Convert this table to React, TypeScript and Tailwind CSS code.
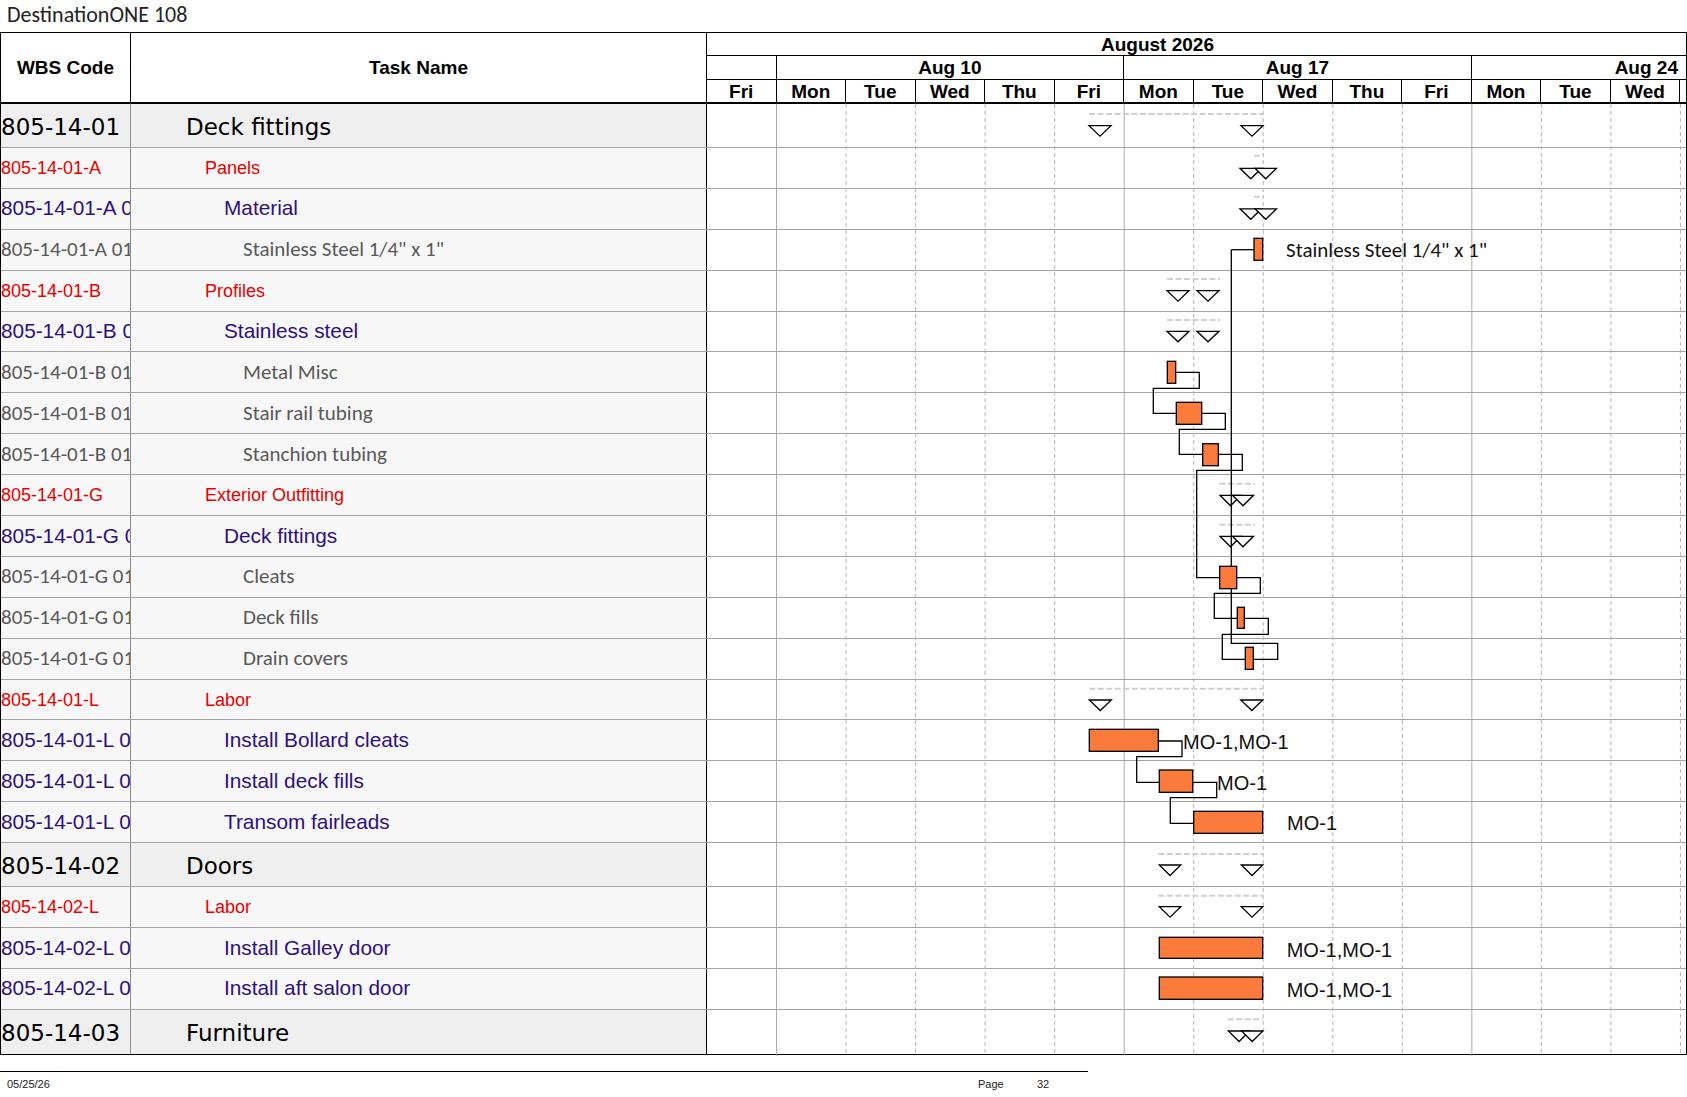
import React from 'react';

const DAY = 69.53;
type Lvl = 1 | 2 | 3 | 4;
type Row = { lvl: Lvl; code: string; name: string };

const rows: Row[] = [
  { lvl: 1, code: '805-14-01', name: 'Deck fittings' },
  { lvl: 2, code: '805-14-01-A', name: 'Panels' },
  { lvl: 3, code: '805-14-01-A 01', name: 'Material' },
  { lvl: 4, code: '805-14-01-A 01 01', name: 'Stainless Steel 1/4" x 1"' },
  { lvl: 2, code: '805-14-01-B', name: 'Profiles' },
  { lvl: 3, code: '805-14-01-B 01', name: 'Stainless steel' },
  { lvl: 4, code: '805-14-01-B 01 01', name: 'Metal Misc' },
  { lvl: 4, code: '805-14-01-B 01 02', name: 'Stair rail tubing' },
  { lvl: 4, code: '805-14-01-B 01 03', name: 'Stanchion tubing' },
  { lvl: 2, code: '805-14-01-G', name: 'Exterior Outfitting' },
  { lvl: 3, code: '805-14-01-G 01', name: 'Deck fittings' },
  { lvl: 4, code: '805-14-01-G 01 01', name: 'Cleats' },
  { lvl: 4, code: '805-14-01-G 01 02', name: 'Deck fills' },
  { lvl: 4, code: '805-14-01-G 01 03', name: 'Drain covers' },
  { lvl: 2, code: '805-14-01-L', name: 'Labor' },
  { lvl: 3, code: '805-14-01-L 01', name: 'Install Bollard cleats' },
  { lvl: 3, code: '805-14-01-L 02', name: 'Install deck fills' },
  { lvl: 3, code: '805-14-01-L 03', name: 'Transom fairleads' },
  { lvl: 1, code: '805-14-02', name: 'Doors' },
  { lvl: 2, code: '805-14-02-L', name: 'Labor' },
  { lvl: 3, code: '805-14-02-L 01', name: 'Install Galley door' },
  { lvl: 3, code: '805-14-02-L 02', name: 'Install aft salon door' },
  { lvl: 1, code: '805-14-03', name: 'Furniture' },
];

const textCls: Record<Lvl, string> = {
  1: "font-['DejaVu_Sans',sans-serif] text-[23px] text-black pt-[3px]",
  2: "font-['Liberation_Sans',Arial,sans-serif] text-[18px] text-[#e60000]",
  3: "font-['Liberation_Sans',Arial,sans-serif] text-[20.8px] text-[#2e1080]",
  4: "font-['Carlito','Lato',sans-serif] text-[21px] text-[#595959]",
};
const namePad: Record<Lvl, string> = {
  1: 'pl-[55px]',
  2: 'pl-[74px]',
  3: 'pl-[93px]',
  4: 'pl-[112px]',
};

const days = ['Fri', 'Mon', 'Tue', 'Wed', 'Thu', 'Fri', 'Mon', 'Tue', 'Wed', 'Thu', 'Fri', 'Mon', 'Tue', 'Wed'];

type Summary = { y: number; x1: number; x2: number; tris: number[]; ty: number; w?: number };
const summaries: Summary[] = [
  { y: 114, x1: 1088, x2: 1262, tris: [1088, 1240], ty: 125.7 },
  { y: 155.7, x1: 1253, x2: 1262, tris: [1239, 1254], ty: 168.3, w: 21.5 },
  { y: 196.7, x1: 1253, x2: 1262, tris: [1239, 1254], ty: 208.8, w: 21.5 },
  { y: 279, x1: 1166, x2: 1219, tris: [1166, 1196], ty: 290.7 },
  { y: 320, x1: 1166, x2: 1219, tris: [1166, 1196], ty: 331.3 },
  { y: 483.7, x1: 1218.3, x2: 1254, tris: [1219, 1231.5], ty: 495.3, w: 21 },
  { y: 524.7, x1: 1218.3, x2: 1254, tris: [1219, 1231.5], ty: 536.3, w: 21 },
  { y: 688.7, x1: 1088.3, x2: 1262.3, tris: [1088.3, 1239.8], ty: 700 },
  { y: 854, x1: 1157.3, x2: 1262.3, tris: [1158.3, 1240.3], ty: 865, w: 21.5 },
  { y: 895.7, x1: 1157.3, x2: 1262.3, tris: [1158.3, 1240.3], ty: 906.7, w: 21.5 },
  { y: 1019.3, x1: 1226.7, x2: 1262, tris: [1227.3, 1240.5], ty: 1031, w: 21.5 },
];

const bars: [number, number, number, number][] = [
  [1253, 1261.7, 238.3, 260.3],
  [1166.3, 1174.7, 361.3, 383.3],
  [1175.3, 1200.7, 402.3, 424.3],
  [1201.7, 1217.3, 443.7, 465.7],
  [1218.7, 1235.7, 566.3, 588.7],
  [1236.3, 1243.3, 607.3, 628.3],
  [1244.3, 1252.3, 647.3, 669.3],
  [1088.3, 1157.3, 729.3, 751.3],
  [1158.3, 1191.7, 770, 792.3],
  [1192.7, 1261.7, 811.3, 833.3],
  [1158.3, 1261.7, 937.3, 958.3],
  [1158.3, 1261.7, 977, 999.3],
];

const links = [
  'M1230.3 249.7 H1253',
  'M1230.3 249.7 V643.3 H1276.7 V659.3 H1252.3',
  'M1174.7 372.3 H1198.3 V388.3 H1152.3 V413.3 H1175.3',
  'M1200.7 413.3 H1224.3 V429.3 H1178.3 V454.3 H1201.7',
  'M1217.3 454.3 H1241.3 V470.3 H1195.7 V577.7 H1218.7',
  'M1235.7 577.7 H1259.3 V593.3 H1213.3 V618.3 H1236.3',
  'M1243.3 618.3 H1267.3 V634.3 H1221.3 V659.3 H1244.3',
  'M1157.3 741 H1181 V756.7 H1135.7 V782.3 H1158.3',
  'M1191.7 782.3 H1215.7 V797.7 H1169.3 V823.3 H1192.7',
];

const labels: { x: number; y: number; t: string; calibri?: boolean }[] = [
  { x: 1285, y: 250, t: 'Stainless Steel 1/4" x 1"', calibri: true },
  { x: 1182, y: 741.5, t: 'MO-1,MO-1' },
  { x: 1216, y: 782.5, t: 'MO-1' },
  { x: 1286, y: 822.5, t: 'MO-1' },
  { x: 1285.7, y: 949.5, t: 'MO-1,MO-1' },
  { x: 1285.7, y: 989.5, t: 'MO-1,MO-1' },
];

function GanttDrawing() {
  const grid = [];
  for (let k = 1; k <= 14; k++) {
    const x = 706.5 + DAY * k - 0.5;
    const solid = k === 1 || k === 6 || k === 11;
    grid.push(
      <line
        key={k}
        x1={x}
        x2={x}
        y1={104}
        y2={1056}
        stroke={solid ? '#a9a9a9' : '#b5b5b5'}
        strokeWidth={1}
        strokeDasharray={solid ? undefined : '4 3'}
      />
    );
  }
  return (
    <svg
      className="absolute left-[706px] top-0 pointer-events-none"
      width={980}
      height={952}
      viewBox="706 104 980 952"
    >
      {grid}
      {summaries.map((s, i) => (
        <g key={i}>
          <line x1={s.x1} x2={s.x2} y1={s.y} y2={s.y} stroke="#cfcfcf" strokeWidth={2} strokeDasharray="6 2.5" />
          {s.tris.map((tx, j) => {
            const w = s.w ?? 22;
            return (
              <polygon
                key={j}
                points={`${tx},${s.ty} ${tx + w},${s.ty} ${tx + w / 2},${s.ty + 10.5}`}
                fill="white"
                stroke="black"
                strokeWidth={1.3}
                strokeLinejoin="miter"
              />
            );
          })}
        </g>
      ))}
      {links.map((d, i) => (
        <path key={i} d={d} fill="none" stroke="black" strokeWidth={1.3} />
      ))}
      {bars.map(([x1, x2, y1, y2], i) => (
        <rect key={i} x={x1} y={y1} width={x2 - x1} height={y2 - y1} fill="#fb7b3d" stroke="black" strokeWidth={1.3} />
      ))}
      {labels.map((l, i) => (
        <text
          key={i}
          x={l.x}
          y={l.y}
          dominantBaseline="central"
          fontSize={l.calibri ? 21 : 20}
          fill="#111"
          fontFamily={l.calibri ? "Carlito, Lato, sans-serif" : "'Liberation Sans', Arial, sans-serif"}
        >
          {l.t}
        </text>
      ))}
    </svg>
  );
}

export default function App() {
  return (
    <div className="w-[1687px] h-[1097px] bg-white overflow-hidden text-black">
      <div className="h-[32px] flex items-center pl-[7px] pb-[2px] font-['Carlito','Lato',sans-serif] text-[22px] text-[#222] leading-none">
        DestinationONE 108
      </div>
      <div className="w-[1687px] border border-black">
        {/* header */}
        <div className="flex h-[71px] font-['Liberation_Sans',Arial,sans-serif] font-bold text-[19px] leading-none">
          <div className="w-[130px] shrink-0 border-r border-black border-b-2 flex items-center justify-center">
            WBS Code
          </div>
          <div className="w-[576px] shrink-0 border-r border-black border-b-2 flex items-center justify-center">
            Task Name
          </div>
          <div className="flex-1 flex flex-col min-w-0">
            <div className="h-[23px] border-b border-black flex items-center justify-center pr-[78px]">August 2026</div>
            <div className="h-[24px] border-b border-black flex">
              <div className="w-[69.53px] shrink-0 border-r border-black" />
              <div className="w-[347.65px] shrink-0 border-r border-black flex items-center justify-center">Aug 10</div>
              <div className="w-[347.65px] shrink-0 border-r border-black flex items-center justify-center">Aug 17</div>
              <div className="flex-1 flex items-center justify-end pr-[8px]">Aug 24</div>
            </div>
            <div className="h-[24px] border-b-2 border-black flex">
              {days.map((d, i) => (
                <div key={i} className="w-[69.53px] shrink-0 border-r border-black flex items-center justify-center">
                  {d}
                </div>
              ))}
              <div className="flex-1" />
            </div>
          </div>
        </div>
        {/* body */}
        <div className="relative">
          {rows.map((r, i) => {
            const last = i === rows.length - 1;
            const bg = r.lvl === 1 ? 'bg-[#efefef]' : 'bg-[#f7f7f7]';
            return (
              <div
                key={i}
                className={`flex ${r.lvl === 1 ? 'h-[44px]' : 'h-[40.9px]'} ${last ? '' : 'border-b border-[#a3a3a3]'}`}
              >
                <div
                  className={`w-[130px] shrink-0 border-r border-[#8c8c8c] overflow-hidden whitespace-nowrap flex items-center leading-none ${bg} ${textCls[r.lvl]}`}
                >
                  {r.code}
                </div>
                <div
                  className={`w-[576px] shrink-0 border-r border-black overflow-hidden whitespace-nowrap flex items-center leading-none ${bg} ${namePad[r.lvl]} ${textCls[r.lvl]}`}
                >
                  {r.name}
                </div>
                <div className="flex-1 bg-white" />
              </div>
            );
          })}
          <GanttDrawing />
        </div>
      </div>
      {/* footer */}
      <div className="mt-[16px] w-[1088px] border-t border-black">
        <div className="flex items-center h-[26px] font-['Liberation_Sans',Arial,sans-serif] text-[11px] text-[#222] leading-none">
          <div className="w-[978px] pl-[7px]">05/25/26</div>
          <div className="w-[59px]">Page</div>
          <div>32</div>
        </div>
      </div>
    </div>
  );
}
